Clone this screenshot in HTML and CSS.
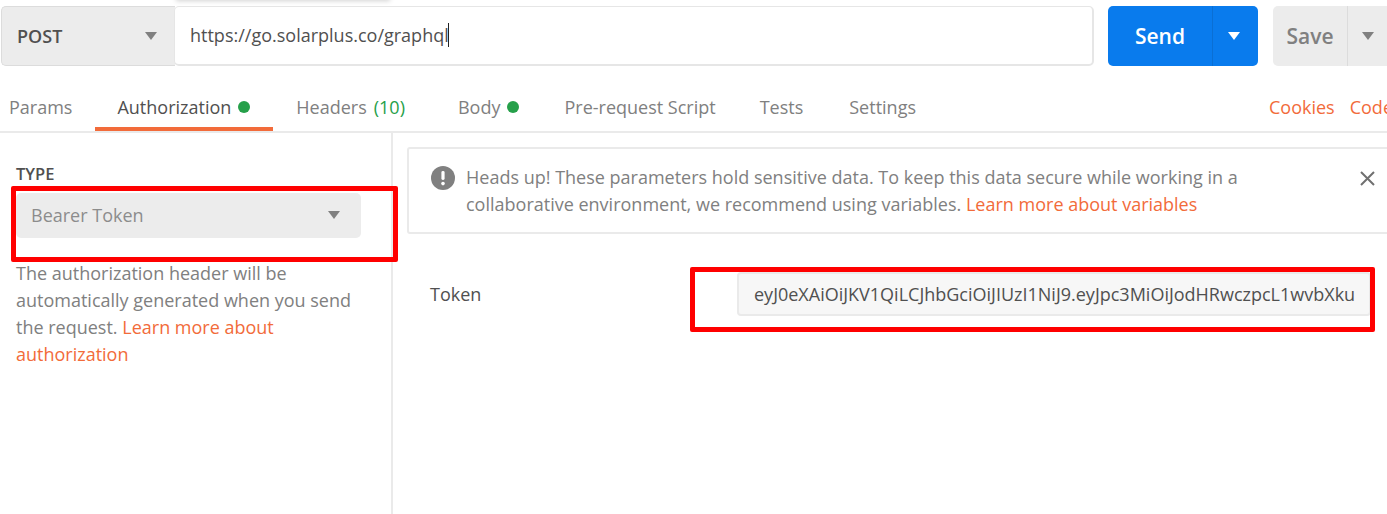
FILE: index.html
```html
<!DOCTYPE html>
<html lang="en">
<head>
    <meta charset="UTF-8">
    <meta name="viewport" content="width=device-width, initial-scale=1.0">
    <title>Authorization</title>
    <link rel="stylesheet" href="styles.css">
</head>
<body>
    <div class="popup-shadow"></div>
    <div class="request-bar">
        <div class="url-group">
            <div class="method">
                <span>POST</span>
                <span class="caret"></span>
            </div>
            <div class="url">https://go.solarplus.co/graphql<span class="cursor"></span></div>
        </div>
        <div class="split-btn send">
            <div class="btn-label">Send</div>
            <div class="btn-arrow"><span class="caret white"></span></div>
        </div>
        <div class="split-btn save">
            <div class="btn-label">Save</div>
            <div class="btn-arrow"><span class="caret"></span></div>
        </div>
    </div>

    <div class="tabs">
        <div class="tab tab-params">Params</div>
        <div class="tab active">Authorization <span class="dot"></span></div>
        <div class="tab tab-headers">Headers <span class="count">(10)</span></div>
        <div class="tab tab-body">Body <span class="dot"></span></div>
        <div class="tab">Pre-request Script</div>
        <div class="tab tab-tests">Tests</div>
        <div class="tab">Settings</div>
        <div class="tab-links">
            <a>Cookies</a>
            <a>Code</a>
        </div>
    </div>

    <div class="content">
        <div class="left-pane">
            <div class="type-label">TYPE</div>
            <div class="type-select">
                <span>Bearer Token</span>
                <span class="caret"></span>
            </div>
            <p class="help">The authorization header will be<br>automatically generated when you send<br>the request. <a>Learn more about</a><br><a>authorization</a></p>
        </div>
        <div class="right-pane">
            <div class="notice">
                <svg class="notice-icon" width="24" height="24" viewBox="0 0 24 24">
                    <circle cx="12" cy="12" r="12" fill="#808080"/>
                    <rect x="10.4" y="5" width="3.2" height="9" rx="1.4" fill="#fff"/>
                    <circle cx="12" cy="17.6" r="1.8" fill="#fff"/>
                </svg>
                <div class="notice-text">Heads up! These parameters hold sensitive data. To keep this data secure while working in a<br>collaborative environment, we recommend using variables. <a>Learn more about variables</a></div>
                <svg class="notice-close" width="15" height="15" viewBox="0 0 15 15">
                    <path d="M1 1 L14 14 M14 1 L1 14" stroke="#707070" stroke-width="2" fill="none"/>
                </svg>
            </div>
            <div class="token-row">
                <div class="token-label">Token</div>
                <div class="token-input">eyJ0eXAiOiJKV1QiLCJhbGciOiJIUzI1NiJ9.eyJpc3MiOiJodHRwczpcL1wvbXku</div>
            </div>
        </div>
    </div>

    <div class="red-box box-type"></div>
    <div class="red-box box-token"></div>
</body>
</html>
```

FILE: styles.css
```css
* {
    margin: 0; padding: 0; box-sizing: border-box;
}
html, body {
    width: 1387px; height: 514px; overflow: hidden;
}
body {
    background: #fff; color: #808080; font-family: "Open Sans", sans-serif; font-size: 18px; position: relative;
}
a {
    color: #f26b3a;
}
.caret {
    display: inline-block; width: 0; height: 0;
    border-left: 6.5px solid transparent; border-right: 6.5px solid transparent; border-top: 8px solid #808080;
}
.caret.white {
    border-top-color: #fff;
}
.popup-shadow {
    position: absolute; left: 176px; top: -8px; width: 214px; height: 8px;
    box-shadow: 0 1px 5px rgba(0, 0, 0, 0.18);
}

/* request bar */
.request-bar {
    display: flex; height: 60px; margin-top: 6px; padding-left: 1px; position: absolute; top: 0; left: 0; width: 1500px;
}
.url-group {
    display: flex; width: 1093px; height: 60px;
}
.method {
    width: 174px; background: #ececec; border: 1px solid #dcdcdc; border-right: 0; border-radius: 5px 0 0 5px;
    display: flex; align-items: center; justify-content: space-between; padding: 0 18px 0 15px;
    color: #505050; font-weight: 600;
}
.url {
    flex: 1; border: 2px solid #e6e6e6; border-radius: 5px; display: flex; align-items: center;
    color: #505050; margin-left: -1px; background: #fff; border-width: 1px 2px 2px 1px; padding-bottom: 1px; padding-left: 15px;
}
.cursor {
    display: inline-block; width: 1px; height: 24px; background: #222; margin-left: -1px;
}
.split-btn {
    display: flex; height: 60px; border-radius: 5px; font-size: 21px; font-weight: 600; overflow: hidden;
}
.btn-label {
    display: flex; align-items: center; justify-content: center; height: 100%;
}
.btn-arrow {
    display: flex; align-items: center; justify-content: center; height: 100%;
}
.send {
    width: 150px; margin-left: 14px; background: #097bed; color: #fff;
}
.send .btn-label {
    width: 105px; border-right: 1px solid #0a6fd4;
}
.send .btn-arrow {
    width: 45px; padding-right: 3px;
}
.save {
    width: 125px; margin-left: 15px; background: #ececec; color: #808080;
}
.save .btn-label {
    width: 75px; border-right: 1px solid #dcdcdc;
}
.save .btn-arrow {
    width: 40px;
}

/* tabs */
.tabs {
    position: absolute; top: 85px; left: 0; width: 1387px; height: 48px; display: flex; border-bottom: 2px solid #eaeaea;
    white-space: nowrap;
}
.tab {
    height: 46px; padding: 0 22px 3px; display: flex; align-items: center; gap: 7px; line-height: 44px;
}
.tab.tab-params {
    padding: 0 23px 3px 9px;
}
.tab.active {
    color: #505050; border-bottom: 4px solid #f26b3a; padding: 1px 23px 0 22px;
}
.tab.tab-headers {
    padding-left: 23px; padding-right: 31px;
}
.tab.tab-body {
    padding-right: 23px;
}
.tab.tab-tests {
    padding-right: 24px;
}
.dot {
    display: inline-block; width: 12px; height: 12px; border-radius: 50%; background: #26a04a;
}
.count {
    color: #26a04a;
}
.tab-links {
    margin-left: auto; display: flex; gap: 15px; padding-bottom: 3px; line-height: 44px; margin-right: -6px;
}

/* content */
.content {
    position: absolute; top: 133px; left: 0; width: 1387px; height: 381px; display: flex;
}
.left-pane {
    width: 393px; border-right: 2px solid #eaeaea; padding: 29px 30px 0 16px;
}
.type-label {
    font-size: 16.5px; font-weight: 600; color: #505050; line-height: 24px;
}
.type-select {
    width: 345px; height: 45px; margin-top: 7px; background: #ececec; border-radius: 5px; color: #8c8c8c;
    display: flex; align-items: center; justify-content: space-between; padding: 0 21px 2px 15px; margin-bottom: 22px;
}
.help {
    line-height: 27px; width: 345px; white-space: nowrap;
}
.right-pane {
    flex: 1; padding: 14px 0 0 14px;
}
.notice {
    position: relative; height: 87px; width: 1000px; border: 2px solid #eaeaea; border-radius: 3px; display: flex; gap: 11px; padding: 15px 0 0 22px;
    line-height: 27px;
}
.notice-icon {
    flex: none; margin-top: 2px;
}
.notice-text {
    white-space: nowrap;
}
.notice-close {
    position: absolute; left: 951px; top: 22px;
}
.token-row {
    display: flex; align-items: center; margin-top: 38px; padding-left: 23px;
}
.token-label {
    width: 307px; color: #505050;
}
.token-input {
    width: 634px; height: 44px; background: #f7f7f7; border: 2px solid #eaeaea; border-radius: 4px; padding-left: 15px;
    line-height: 40px; color: #505050; white-space: nowrap; overflow: hidden;
}

/* highlight boxes drawn over the screenshot */
.red-box {
    position: absolute; border: 5px solid #f00; border-radius: 2px;
}
.box-type {
    left: 11px; top: 186px; width: 387px; height: 76px;
}
.box-token {
    left: 690px; top: 267px; width: 685px; height: 65px;
}
```
